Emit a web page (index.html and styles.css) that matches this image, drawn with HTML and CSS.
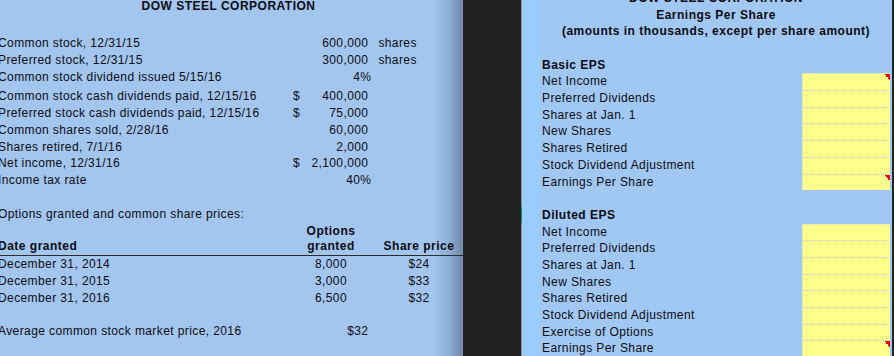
FILE: index.html
```html
<!DOCTYPE html>
<html>
<head>
<meta charset="utf-8">
<link rel="stylesheet" href="styles.css">
</head>
<body>
<div class="left">
  <div class="l-title">DOW STEEL CORPORATION</div>
  <div class="sp-a"></div>
  <div class="lrow"><span class="lab">Common stock, 12/31/15</span><span class="val"><span class="cur"></span><span>600,000</span></span><span class="unit">shares</span></div>
  <div class="lrow"><span class="lab">Preferred stock, 12/31/15</span><span class="val"><span class="cur"></span><span>300,000</span></span><span class="unit">shares</span></div>
  <div class="lrow"><span class="lab">Common stock dividend issued 5/15/16</span><span class="val"><span class="cur"></span><span class="pct">4%</span></span></div>
  <div class="sp-b"></div>
  <div class="lrow"><span class="lab">Common stock cash dividends paid, 12/15/16</span><span class="val"><span class="cur">$</span><span>400,000</span></span></div>
  <div class="lrow"><span class="lab">Preferred stock cash dividends paid, 12/15/16</span><span class="val"><span class="cur">$</span><span>75,000</span></span></div>
  <div class="lrow"><span class="lab">Common shares sold, 2/28/16</span><span class="val"><span class="cur"></span><span>60,000</span></span></div>
  <div class="lrow"><span class="lab">Shares retired, 7/1/16</span><span class="val"><span class="cur"></span><span>2,000</span></span></div>
  <div class="lrow"><span class="lab">Net income, 12/31/16</span><span class="val"><span class="cur">$</span><span>2,100,000</span></span></div>
  <div class="lrow"><span class="lab">Income tax rate</span><span class="val"><span class="cur"></span><span class="pct">40%</span></span></div>
  <div class="lrow"></div>
  <div class="lrow"><span class="lab">Options granted and common share prices:</span></div>
  <div class="trow bold"><span class="tlab"></span><span class="topt">Options</span><span class="tprice"></span></div>
  <div class="trow bold head"><span class="tlab">Date granted</span><span class="topt">granted</span><span class="tprice">Share price</span></div>
  <div class="trow"><span class="tlab">December 31, 2014</span><span class="topt">8,000</span><span class="tprice">$24</span></div>
  <div class="trow"><span class="tlab">December 31, 2015</span><span class="topt">3,000</span><span class="tprice">$33</span></div>
  <div class="trow"><span class="tlab">December 31, 2016</span><span class="topt">6,500</span><span class="tprice">$32</span></div>
  <div class="lrow"></div>
  <div class="lrow"><span class="lab">Average common stock market price, 2016</span><span class="val"><span class="cur"></span><span>$32</span></span></div>
</div>
<div class="gap"></div>
<div class="divider"></div>
<div class="strip"></div>
<div class="right">
  <div class="rinner">
    <div class="rrow center bold">DOW STEEL CORPORATION</div>
    <div class="rrow center bold">Earnings Per Share</div>
    <div class="rrow center bold">(amounts in thousands, except per share amount)</div>
    <div class="rrow"></div>
    <div class="rrow bold">Basic EPS</div>
    <div class="rrow"><span class="rlab">Net Income</span><span class="cell first flag"></span></div>
    <div class="rrow"><span class="rlab">Preferred Dividends</span><span class="cell"></span></div>
    <div class="rrow"><span class="rlab">Shares at Jan. 1</span><span class="cell"></span></div>
    <div class="rrow"><span class="rlab">New Shares</span><span class="cell"></span></div>
    <div class="rrow"><span class="rlab">Shares Retired</span><span class="cell"></span></div>
    <div class="rrow"><span class="rlab">Stock Dividend Adjustment</span><span class="cell"></span></div>
    <div class="rrow"><span class="rlab">Earnings Per Share</span><span class="cell flag"></span></div>
    <div class="rrow"></div>
    <div class="rrow bold">Diluted EPS</div>
    <div class="rrow"><span class="rlab">Net Income</span><span class="cell first"></span></div>
    <div class="rrow"><span class="rlab">Preferred Dividends</span><span class="cell"></span></div>
    <div class="rrow"><span class="rlab">Shares at Jan. 1</span><span class="cell"></span></div>
    <div class="rrow"><span class="rlab">New Shares</span><span class="cell"></span></div>
    <div class="rrow"><span class="rlab">Shares Retired</span><span class="cell"></span></div>
    <div class="rrow"><span class="rlab">Stock Dividend Adjustment</span><span class="cell"></span></div>
    <div class="rrow"><span class="rlab">Exercise of Options</span><span class="cell"></span></div>
    <div class="rrow"><span class="rlab">Earnings Per Share</span><span class="cell flag"></span></div>
  </div>
</div>
<div class="edge"></div>
</body>
</html>
```
FILE: styles.css
```css
html, body {
  margin: 0;
  padding: 0;
}
body {
  width: 894px;
  height: 356px;
  overflow: hidden;
  display: flex;
  background: #222222;
  font-family: "Liberation Sans", Arial, sans-serif;
  font-size: 12px;
  letter-spacing: 0.4px;
  color: #0c0c14;
}
.bold { font-weight: bold; letter-spacing: 0.5px; }

/* left window */
.left {
  width: 463px;
  flex: none;
  height: 356px;
  overflow: hidden;
  display: flex;
  flex-direction: column;
  background: linear-gradient(to right, #a2c6ee 0, #a2c6ee 433px, #90b0d6 448px, #6f89ab 462px, #8a9fb8 463px);
}
.l-title {
  height: 12px;
  line-height: 12px;
  flex: none;
  font-weight: bold;
  letter-spacing: 0.5px;
  text-align: center;
  padding-right: 6px;
}
.sp-a { height: 23.3px; flex: none; }
.sp-b { height: 2.6px; flex: none; }
.lrow {
  height: 16.8px;
  line-height: 16.8px;
  flex: none;
  display: flex;
  white-space: nowrap;
  margin-left: -2px;
}
.lab { width: 295px; flex: none; }
.val {
  width: 75.4px;
  flex: none;
  display: flex;
  justify-content: space-between;
}
.cur { width: 8px; }
.pct { margin-right: -3px; }
.unit { margin-left: 10px; }

.trow {
  height: 16.8px;
  line-height: 16.8px;
  flex: none;
  display: flex;
  white-space: nowrap;
  margin-left: -2px;
}
.trow.head {
  border-bottom: 1px solid #2c2c30;
  box-sizing: border-box;
  line-height: 15.8px;
}
.tlab { width: 302px; flex: none; }
.topt { width: 62px; flex: none; text-align: center; }
.tprice { width: 78px; flex: none; text-align: center; margin-left: 18px; }

/* dark gap */
.gap { width: 58px; flex: none; background: #222222; }
.divider {
  width: 1px;
  flex: none;
  background: linear-gradient(to bottom, #8a8d92 0, #8a8d92 207px, #1e8a6e 207px, #1e8a6e 223px, #8a8d92 223px);
}
.strip { width: 18px; flex: none; background: #99ccff; }

/* right window */
.right {
  width: 352px;
  flex: none;
  height: 356px;
  overflow: hidden;
  background: #a1c8f2;
}
.rinner {
  margin-top: -10.05px;
  display: flex;
  flex-direction: column;
}
.rrow {
  height: 16.7px;
  line-height: 16.7px;
  flex: none;
  display: flex;
  padding-left: 2px;
  white-space: nowrap;
}
.rrow.center { justify-content: center; padding-left: 0; }
.rlab { width: 260px; flex: none; }
.cell {
  width: 88px;
  height: 16.7px;
  flex: none;
  box-sizing: border-box;
  background-color: #ffff8c;
  border-top: 1px dotted #bcd2e4;
  border-left: 1px solid #e4ecb4;
}
.cell.first { border-top: 1px solid #e4ecb4; }
.cell.flag {
  background: linear-gradient(45deg, transparent 50%, #ff0000 50%) top right / 6px 6px no-repeat, #ffff8c;
}
.edge { width: 2px; flex: none; background: #222222; }
```
